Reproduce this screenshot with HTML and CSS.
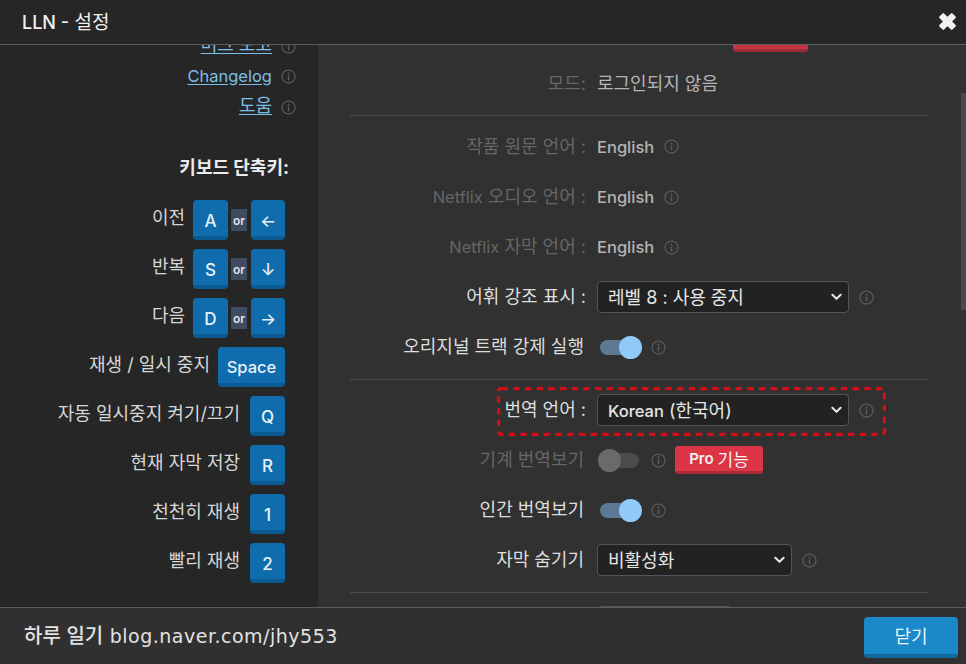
FILE: index.html
```html
<!DOCTYPE html>
<html lang="ko">
<head>
<meta charset="utf-8">
<title>LLN - 설정</title>
<link rel="stylesheet" href="styles.css">
</head>
<body>
<svg class="defs" width="0" height="0" aria-hidden="true">
  <symbol id="info" viewBox="0 0 16 16">
    <circle cx="8" cy="8" r="7" fill="none" stroke="currentColor" stroke-width="1.2"/>
    <rect x="7.3" y="7" width="1.4" height="5" fill="currentColor"/>
    <circle cx="8" cy="4.8" r="0.95" fill="currentColor"/>
  </symbol>
  <symbol id="chev" viewBox="0 0 12 8">
    <path d="M1.5 1.5 6 6l4.500-4.500" fill="none" stroke="currentColor" stroke-width="2.200" stroke-linecap="round" stroke-linejoin="round"/>
  </symbol>
</svg>
<div class="dialog">
  <header class="head">
    <h1 class="title"><span class="en">LLN -</span> 설정</h1>
    <svg class="close" viewBox="0 0 20 20" aria-label="닫기"><path d="M3 6 6 3l4 4 4-4 3 3-4 4 4 4-3 3-4-4-4 4-3-3 4-4Z" fill="#f2f2f2" stroke="#f2f2f2" stroke-width="2" stroke-linejoin="round"/></svg>
  </header>
  <main class="body">
    <aside class="side">
      <div class="link-row"><a class="link">버그 보고</a><svg class="info"><use href="#info"/></svg></div>
      <div class="link-row"><a class="link en">Changelog</a><svg class="info"><use href="#info"/></svg></div>
      <div class="link-row"><a class="link">도움</a><svg class="info"><use href="#info"/></svg></div>
      <div class="kb-title">키보드 단축키:</div>
      <div class="kb-row"><span class="kb-label kb-label--wide">이전</span><span class="key">A</span><span class="or">or</span><span class="key">←</span></div>
      <div class="kb-row"><span class="kb-label kb-label--wide">반복</span><span class="key">S</span><span class="or">or</span><span class="key">↓</span></div>
      <div class="kb-row"><span class="kb-label kb-label--wide">다음</span><span class="key">D</span><span class="or">or</span><span class="key">→</span></div>
      <div class="kb-row"><span class="kb-label kb-label--wide">재생 / 일시 중지</span><span class="key key--space">Space</span></div>
      <div class="kb-row"><span class="kb-label">자동 일시중지 켜기/끄기</span><span class="key">Q</span></div>
      <div class="kb-row"><span class="kb-label">현재 자막 저장</span><span class="key">R</span></div>
      <div class="kb-row"><span class="kb-label">천천히 재생</span><span class="key">1</span></div>
      <div class="kb-row"><span class="kb-label">빨리 재생</span><span class="key">2</span></div>
    </aside>
    <section class="panel">
      <div class="clip-btn"></div>
      <div class="row row--mode"><span class="label label--off">모드:</span><span class="value">로그인되지 않음</span></div>
      <hr class="rule rule--a">
      <div class="row row--tall"><span class="label label--off">작품 원문 언어 :</span><span class="value en">English</span><svg class="info"><use href="#info"/></svg></div>
      <div class="row"><span class="label label--off"><span class="en">Netflix</span> 오디오 언어 :</span><span class="value en">English</span><svg class="info"><use href="#info"/></svg></div>
      <div class="row"><span class="label label--off"><span class="en">Netflix</span> 자막 언어 :</span><span class="value en">English</span><svg class="info"><use href="#info"/></svg></div>
      <div class="row"><span class="label">어휘 강조 표시 :</span><div class="select"><span>레벨 8 : 사용 중지</span><svg class="chev"><use href="#chev"/></svg></div><svg class="info"><use href="#info"/></svg></div>
      <div class="row"><span class="label label--plain">오리지널 트랙 강제 실행</span><span class="toggle toggle--on"><i class="knob"></i></span><svg class="info"><use href="#info"/></svg></div>
      <hr class="rule rule--b">
      <div class="row row--marked">
        <span class="label">번역 언어 :</span><div class="select"><span><span class="en">Korean</span> (한국어)</span><svg class="chev"><use href="#chev"/></svg></div><svg class="info"><use href="#info"/></svg>
        <svg class="mark" viewBox="0 0 389 49"><rect x="1.500" y="1.500" width="386" height="46" rx="3" fill="none" stroke="#d10f16" stroke-width="3.500" stroke-dasharray="6.500 5.200"/></svg>
      </div>
      <div class="row"><span class="label label--off label--plain">기계 번역보기</span><span class="toggle toggle--off"><i class="knob"></i></span><svg class="info"><use href="#info"/></svg><span class="pro"><span class="en">Pro</span> 기능</span></div>
      <div class="row"><span class="label label--plain">인간 번역보기</span><span class="toggle toggle--on"><i class="knob"></i></span><svg class="info"><use href="#info"/></svg></div>
      <div class="row"><span class="label label--plain">자막 숨기기</span><div class="select select--short"><span>비활성화</span><svg class="chev"><use href="#chev"/></svg></div><svg class="info"><use href="#info"/></svg></div>
      <hr class="rule rule--c">
      <div class="select select--clip"></div>
      <div class="scrollbar"></div>
    </section>
  </main>
  <footer class="foot">
    <span class="blog"><span class="blog-ko">하루 일기</span> blog.naver.com/jhy553</span>
    <button class="done">닫기</button>
  </footer>
</div>
</body>
</html>
```
FILE: styles.css
```css
* { box-sizing: border-box; }
html, body { margin: 0; height: 100%; }
body {
  background: #262626;
  color: #e4e4e4;
  font-family: Inter, "Noto Sans CJK KR", sans-serif;
  font-size: 18px;
  overflow: hidden;
}
.en { font-size: 16.500px; }
.defs { position: absolute; }
.dialog { display: flex; flex-direction: column; width: 966px; height: 664px; }

.head {
  flex: 0 0 45px;
  display: flex;
  align-items: center;
  justify-content: space-between;
  padding: 0 8px 4px 22px;
  background: #262626;
  border-bottom: 1px solid #5c5c5c;
}
.title { margin: 0; font-size: 19px; font-weight: 400; color: #f0f0f0; }
.title .en { font-size: 18px; font-weight: 500; }
.close { width: 21px; height: 21px; margin-top: 3px; }

.body { flex: 1; display: flex; min-height: 0; }

.side { flex: 0 0 318px; background: #262626; overflow: hidden; padding: 0 22px 0 0; }
.link-row { display: flex; align-items: center; justify-content: flex-end; gap: 9px; height: 30.5px; }
.link-row:first-child { margin-top: -14px; }
.link { color: #7dbde6; text-decoration: underline; text-underline-offset: 2px; line-height: 20px; margin-top: -2px; }
.info { flex: none; width: 15px; height: 15px; color: #5f5f5f; }

.kb-title {
  margin: 33px 7px 20.500px 0;
  height: 24px;
  line-height: 24px;
  text-align: right;
  font-weight: 700;
  color: #ececec;
}
.kb-row { display: flex; align-items: flex-start; justify-content: flex-end; height: 49px; padding-right: 11px; }
.kb-label { margin: 7px 10px 0 0; line-height: 22px; color: #d6d6d6; white-space: nowrap; }
.kb-label--wide { margin-right: 8px; }
.key {
  flex: none;
  width: 35px;
  height: 39.500px;
  padding-top: 6px;
  display: flex;
  align-items: center;
  justify-content: center;
  background: #0f6cad;
  border-bottom: 4px solid #0c5a92;
  border-radius: 4px;
  color: #e8f0f6;
  font-weight: 500;
  font-size: 17px;
}
.or + .key { width: 34px; }
.key--space { width: 67px; font-size: 16.500px; padding-top: 4px; }
.or {
  flex: none;
  width: 16px;
  height: 22px;
  margin: 9px 4px 0 3px;
  display: flex;
  align-items: center;
  justify-content: center;
  background: #3f4a63;
  color: #dfe3ea;
  font-size: 12px;
  font-weight: 600;
}

.panel { position: relative; flex: 1; background: #313131; padding: 0 37px 0 32px; overflow: hidden; }
.clip-btn {
  width: 75px;
  height: 28px;
  margin: -21px 0 12px 383px;
  background: #c73543;
  border-bottom: 3px solid #9c2b37;
  border-radius: 3px;
}
.row { position: relative; display: flex; align-items: center; height: 50px; }
.row--mode { height: 40px; }
.row--tall { height: 51px; }
.label { flex: 0 0 236px; margin-right: 11px; text-align: right; white-space: nowrap; color: #dedede; line-height: 24px; }
.label--plain { padding-right: 2px; }
.label--off { color: #666; }
.value { color: #b4b4b4; line-height: 24px; }
.value.en { font-weight: 500; }
.row > .info { margin-left: 10px; }
.rule { height: 1px; border: 0; background: #4b4b4b; }
.rule--a { margin: 11px 0 5px; }
.rule--b { margin: 7px 0 5px; }
.rule--c { margin: 7px 0 13px; }

.select {
  flex: none;
  display: flex;
  align-items: center;
  justify-content: space-between;
  width: 252px;
  height: 32px;
  padding: 0 6px 2px 10px;
  background: #222;
  border: 1px solid #4c5661;
  border-radius: 4px;
  color: #e6e6e6;
  font-weight: 400;
  white-space: nowrap;
}
.select .en { font-weight: 500; }
.select--short { width: 195px; }
.select--clip { width: 136px; margin-left: 247px; }
.chev { width: 11px; height: 8px; margin-top: 2px; color: #e6e6e6; }

.toggle { position: relative; flex: none; width: 39px; height: 15px; margin-left: 3px; border-radius: 8px; }
.toggle--on { background: #5c7a94; }
.toggle--off { background: #4b4b4b; }
.knob { position: absolute; top: -4px; width: 23px; height: 23px; border-radius: 50%; }
.toggle--on .knob { right: -3px; background: #90caf9; }
.toggle--off .knob { left: -2px; background: #6a6a6a; }
.toggle + .info { margin-left: 12px; }

.pro {
  margin-left: 9px;
  width: 88px;
  height: 28px;
  display: flex;
  gap: 4px;
  align-items: center;
  justify-content: center;
  background: #dc3545;
  border-bottom: 3px solid #a92b39;
  border-radius: 3px;
  color: #f4f4f4;
  font-weight: 400;
  font-size: 17px;
}
.pro .en { font-size: 15px; font-weight: 600; }
.mark { position: absolute; left: 147px; top: 2px; width: 389px; height: 49px; }
.scrollbar { position: absolute; right: 0; top: 48px; width: 5px; height: 217px; background: #4a4a4a; }

.foot {
  flex: 0 0 57px;
  display: flex;
  align-items: center;
  justify-content: space-between;
  padding: 0 8px 0 24px;
  background: #303030;
  border-top: 1px solid #5c5c5c;
}
.blog { font-family: "DejaVu Sans", "Noto Sans CJK KR", sans-serif; font-size: 19px; letter-spacing: 0.5px; color: #e2e2e2; white-space: nowrap; margin-top: -3px; }
.blog-ko { font-family: "Noto Sans CJK KR", sans-serif; font-size: 20px; font-weight: 500; letter-spacing: 0; }
.done {
  width: 94px;
  height: 41px;
  margin-top: 2px;
  padding: 0;
  background: #1a88c9;
  border: 0;
  border-bottom: 4px solid #13689c;
  border-radius: 4px;
  color: #e8f2f8;
  font: 400 18px Inter, "Noto Sans CJK KR", sans-serif;
}
```
